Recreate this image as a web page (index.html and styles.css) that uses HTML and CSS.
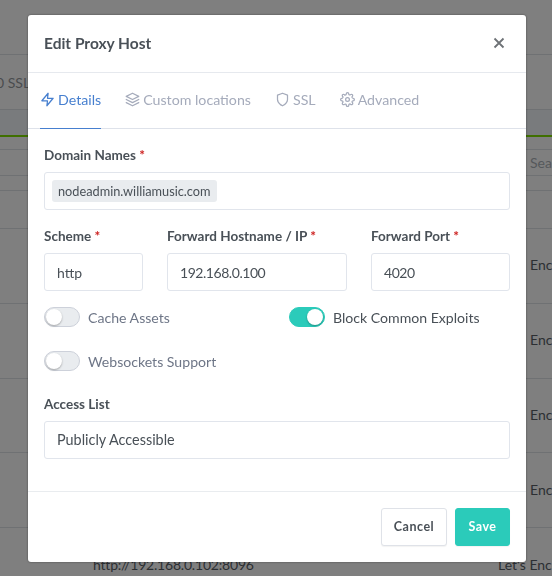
FILE: index.html
```html
<!DOCTYPE html>
<html lang="en">
  <head>
    <meta charset="UTF-8" />
    <title>Edit Proxy Host</title>
    <link rel="stylesheet" href="styles.css">
  </head>
  <body>
    <div class="page">
      <div class="row row-top"></div>
      <div class="row row-title"><span class="title-text">0 SSL</span></div>
      <div class="row row-head"></div>
      <div class="row row-accent"></div>
      <div class="row row-gap"></div>
      <div class="row row-search"><span class="cell-right">Sea</span></div>
      <div class="row row-gap2"></div>
      <div class="row row-blank"></div>
      <div class="row row-host"><span class="cell-right">Enc</span></div>
      <div class="row row-host"><span class="cell-right">Enc</span></div>
      <div class="row row-host"><span class="cell-right">Enc</span></div>
      <div class="row row-host"><span class="cell-right">Enc</span></div>
      <div class="row row-last"><span class="cell-url">http://192.168.0.102:8096</span><span class="cell-lets">Let's Enc</span></div>
    </div>

    <div class="modal">
      <div class="modal-header">
        <h5>Edit Proxy Host</h5>
        <svg class="close" viewBox="0 0 12 12"><path d="M1.5 1.5l9 9M10.5 1.5l-9 9" /></svg>
      </div>

      <div class="tabs">
        <a class="tab active">
          <svg class="icon" viewBox="0 0 24 24"><polygon points="13 2 3 14 12 14 11 22 21 10 12 10 13 2" /></svg>
          Details
        </a>
        <a class="tab">
          <svg class="icon" viewBox="0 0 24 24"><polygon points="12 2 2 7 12 12 22 7 12 2" /><polyline points="2 17 12 22 22 17" /><polyline points="2 12 12 17 22 12" /></svg>
          Custom locations
        </a>
        <a class="tab">
          <svg class="icon" viewBox="0 0 24 24"><path d="M12 22s8-4 8-10V5l-8-3-8 3v7c0 6 8 10 8 10z" /></svg>
          SSL
        </a>
        <a class="tab">
          <svg class="icon" viewBox="0 0 24 24"><circle cx="12" cy="12" r="3" /><path d="M19.4 15a1.65 1.65 0 0 0 .33 1.82l.06.06a2 2 0 0 1 0 2.83 2 2 0 0 1-2.83 0l-.06-.06a1.65 1.65 0 0 0-1.82-.33 1.65 1.65 0 0 0-1 1.51V21a2 2 0 0 1-2 2 2 2 0 0 1-2-2v-.09A1.65 1.65 0 0 0 9 19.4a1.65 1.65 0 0 0-1.82.33l-.06.06a2 2 0 0 1-2.83 0 2 2 0 0 1 0-2.83l.06-.06a1.65 1.65 0 0 0 .33-1.82 1.65 1.65 0 0 0-1.51-1H3a2 2 0 0 1-2-2 2 2 0 0 1 2-2h.09A1.65 1.65 0 0 0 4.6 9a1.65 1.65 0 0 0-.33-1.82l-.06-.06a2 2 0 0 1 0-2.83 2 2 0 0 1 2.83 0l.06.06a1.65 1.65 0 0 0 1.82.33H9a1.65 1.65 0 0 0 1-1.51V3a2 2 0 0 1 2-2 2 2 0 0 1 2 2v.09a1.65 1.65 0 0 0 1 1.51 1.65 1.65 0 0 0 1.82-.33l.06-.06a2 2 0 0 1 2.83 0 2 2 0 0 1 0 2.83l-.06.06a1.65 1.65 0 0 0-.33 1.82V9a1.65 1.65 0 0 0 1.51 1H21a2 2 0 0 1 2 2 2 2 0 0 1-2 2h-.09a1.65 1.65 0 0 0-1.51 1z" /></svg>
          Advanced
        </a>
      </div>

      <div class="modal-body">
        <div class="field">
          <div class="label">Domain Names <span class="req">*</span></div>
          <div class="control control-tags"><span class="tag">nodeadmin.williamusic.com</span></div>
        </div>

        <div class="field-grid">
          <div class="field">
            <div class="label">Scheme <span class="req">*</span></div>
            <div class="control">http</div>
          </div>
          <div class="field">
            <div class="label">Forward Hostname / IP <span class="req">*</span></div>
            <div class="control numeric">192.168.0.100</div>
          </div>
          <div class="field">
            <div class="label">Forward Port <span class="req">*</span></div>
            <div class="control numeric">4020</div>
          </div>
        </div>

        <div class="switch-grid">
          <label class="switch"><span class="track"></span>Cache Assets</label>
          <label class="switch on"><span class="track"></span>Block Common Exploits</label>
          <label class="switch"><span class="track"></span>Websockets Support</label>
        </div>

        <div class="field">
          <div class="label">Access List</div>
          <div class="control control-wide">Publicly Accessible</div>
        </div>
      </div>

      <div class="modal-footer">
        <button type="button" class="btn">Cancel</button>
        <button type="button" class="btn btn-save">Save</button>
      </div>
    </div>
  </body>
</html>
```

FILE: styles.css
```css
body {
  margin: 0;
  height: 576px;
  overflow: hidden;
  background-color: #7f7f7f;
  font-family: "Lato", "Open Sans", sans-serif;
  font-size: 14px;
  color: #495057;
}

/* page behind the overlay */
.page {
  height: 576px;
  overflow: hidden;
  color: #2c2f33;
}
.row {
  box-sizing: border-box;
  display: flex;
  align-items: center;
  border-bottom: 1px solid #6f7173;
}
.row-top { height: 55px; }
.row-title { height: 55px; }
.row-head { height: 25px; border-bottom: 0; background-color: #797b7d; }
.row-accent { height: 2px; border-bottom: 0; background-color: #3f6f00; }
.row-gap { height: 13px; }
.row-search { height: 26px; }
.row-gap2 { height: 15px; }
.row-blank { height: 38px; }
.row-host { height: 74.75px; padding-bottom: 2px; }
.row-last {
  height: 48px;
  border-bottom: 0;
  align-items: flex-start;
  padding-top: 28px;
}
.title-text {
  margin-left: -4px;
  color: #4a4c4e;
}
.cell-right {
  margin-left: 530px;
  white-space: nowrap;
}
.row-search .cell-right { color: #55585b; }
.cell-url {
  width: 405px;
  margin-left: 93px;
  letter-spacing: -0.2px;
  white-space: nowrap;
}
.cell-lets { white-space: nowrap; }

/* modal */
.modal {
  position: fixed;
  top: 15px;
  left: 28px;
  width: 498px;
  height: 547px;
  display: flex;
  flex-direction: column;
  background-color: #ffffff;
  border-radius: 3px;
  box-shadow: 0 0 2px rgba(0, 0, 0, 0.5);
}
.modal-header {
  box-sizing: border-box;
  height: 58px;
  display: flex;
  align-items: center;
  justify-content: space-between;
  padding: 0 21px 2px 16px;
  border-bottom: 1px solid #e6e9ee;
}
.modal-header h5 {
  margin: 0;
  font-size: 15.5px;
  font-weight: 700;
  color: #495057;
}
.close {
  width: 12px;
  height: 12px;
  fill: none;
  stroke: #6e7276;
  stroke-width: 1.8;
}

.tabs {
  box-sizing: border-box;
  height: 56px;
  display: flex;
  gap: 24px;
  padding: 0 12px;
  border-bottom: 1px solid #dee2ea;
}
.tab {
  display: flex;
  align-items: center;
  gap: 3px;
  margin-bottom: -1px;
  padding-bottom: 2px;
  font-size: 14.2px;
  color: #a5abbb;
  border-bottom: 1px solid transparent;
}
.tab.active {
  color: #467fcf;
  border-bottom-color: #467fcf;
}
.icon {
  width: 15px;
  height: 15px;
  fill: none;
  stroke: currentColor;
  stroke-width: 2;
  stroke-linecap: round;
  stroke-linejoin: round;
}

.modal-body {
  flex: 1;
  padding: 16px 16px 0;
}
.label {
  height: 20px;
  margin-bottom: 7px;
  line-height: 20px;
  font-size: 13.5px;
  font-weight: 700;
  white-space: nowrap;
}
.req { color: #cd201f; }
.control {
  box-sizing: border-box;
  height: 38px;
  display: flex;
  align-items: center;
  padding: 0 12px;
  border: 1px solid #e1e5ec;
  border-radius: 3px;
  color: #495057;
}
.control-tags { padding-left: 7px; }
.control-wide { font-size: 14.4px; padding-bottom: 1px; }
.numeric { letter-spacing: -0.45px; }
.tag {
  padding: 3px 6px;
  background-color: #e9ecef;
  border-radius: 3px;
  font-size: 12.75px;
}
.field-grid {
  display: grid;
  grid-template-columns: 99px 180px 139px;
  gap: 24px;
  margin-top: 16px;
}
.switch-grid {
  display: grid;
  grid-template-columns: 245px 1fr;
  row-gap: 24px;
  margin: 16px 0 23px;
}
.switch {
  display: flex;
  align-items: center;
  gap: 8px;
  height: 20px;
  font-size: 14.1px;
  color: #6e7687;
}
.switch.on { color: #495057; }
.track {
  box-sizing: border-box;
  position: relative;
  width: 36px;
  height: 20px;
  background-color: #e9ecef;
  border: 1px solid #cdd1da;
  border-radius: 10px;
}
.track::after {
  content: "";
  position: absolute;
  top: 1px;
  left: 1px;
  width: 16px;
  height: 16px;
  background-color: #ffffff;
  border-radius: 50%;
  box-shadow: 0 1px 2px rgba(0, 0, 0, 0.3);
}
.on .track {
  background-color: #2bcbba;
  border-color: #2bcbba;
}
.on .track::after { left: 17px; }

.modal-footer {
  box-sizing: border-box;
  height: 71px;
  display: flex;
  justify-content: flex-end;
  gap: 8px;
  padding: 16px;
  border-top: 1px solid #e9ecef;
}
.btn {
  height: 38px;
  width: 66px;
  padding: 0 0 2px;
  font-family: inherit;
  font-size: 12.5px;
  font-weight: 700;
  letter-spacing: 0.5px;
  color: #495057;
  background-color: #ffffff;
  border: 1px solid #dfe2e8;
  border-radius: 3px;
  box-shadow: 0 1px 1px rgba(0, 0, 0, 0.05);
}
.btn-save {
  width: 55px;
  color: #ffffff;
  background-color: #2bcbba;
  border-color: #2bcbba;
}
```
